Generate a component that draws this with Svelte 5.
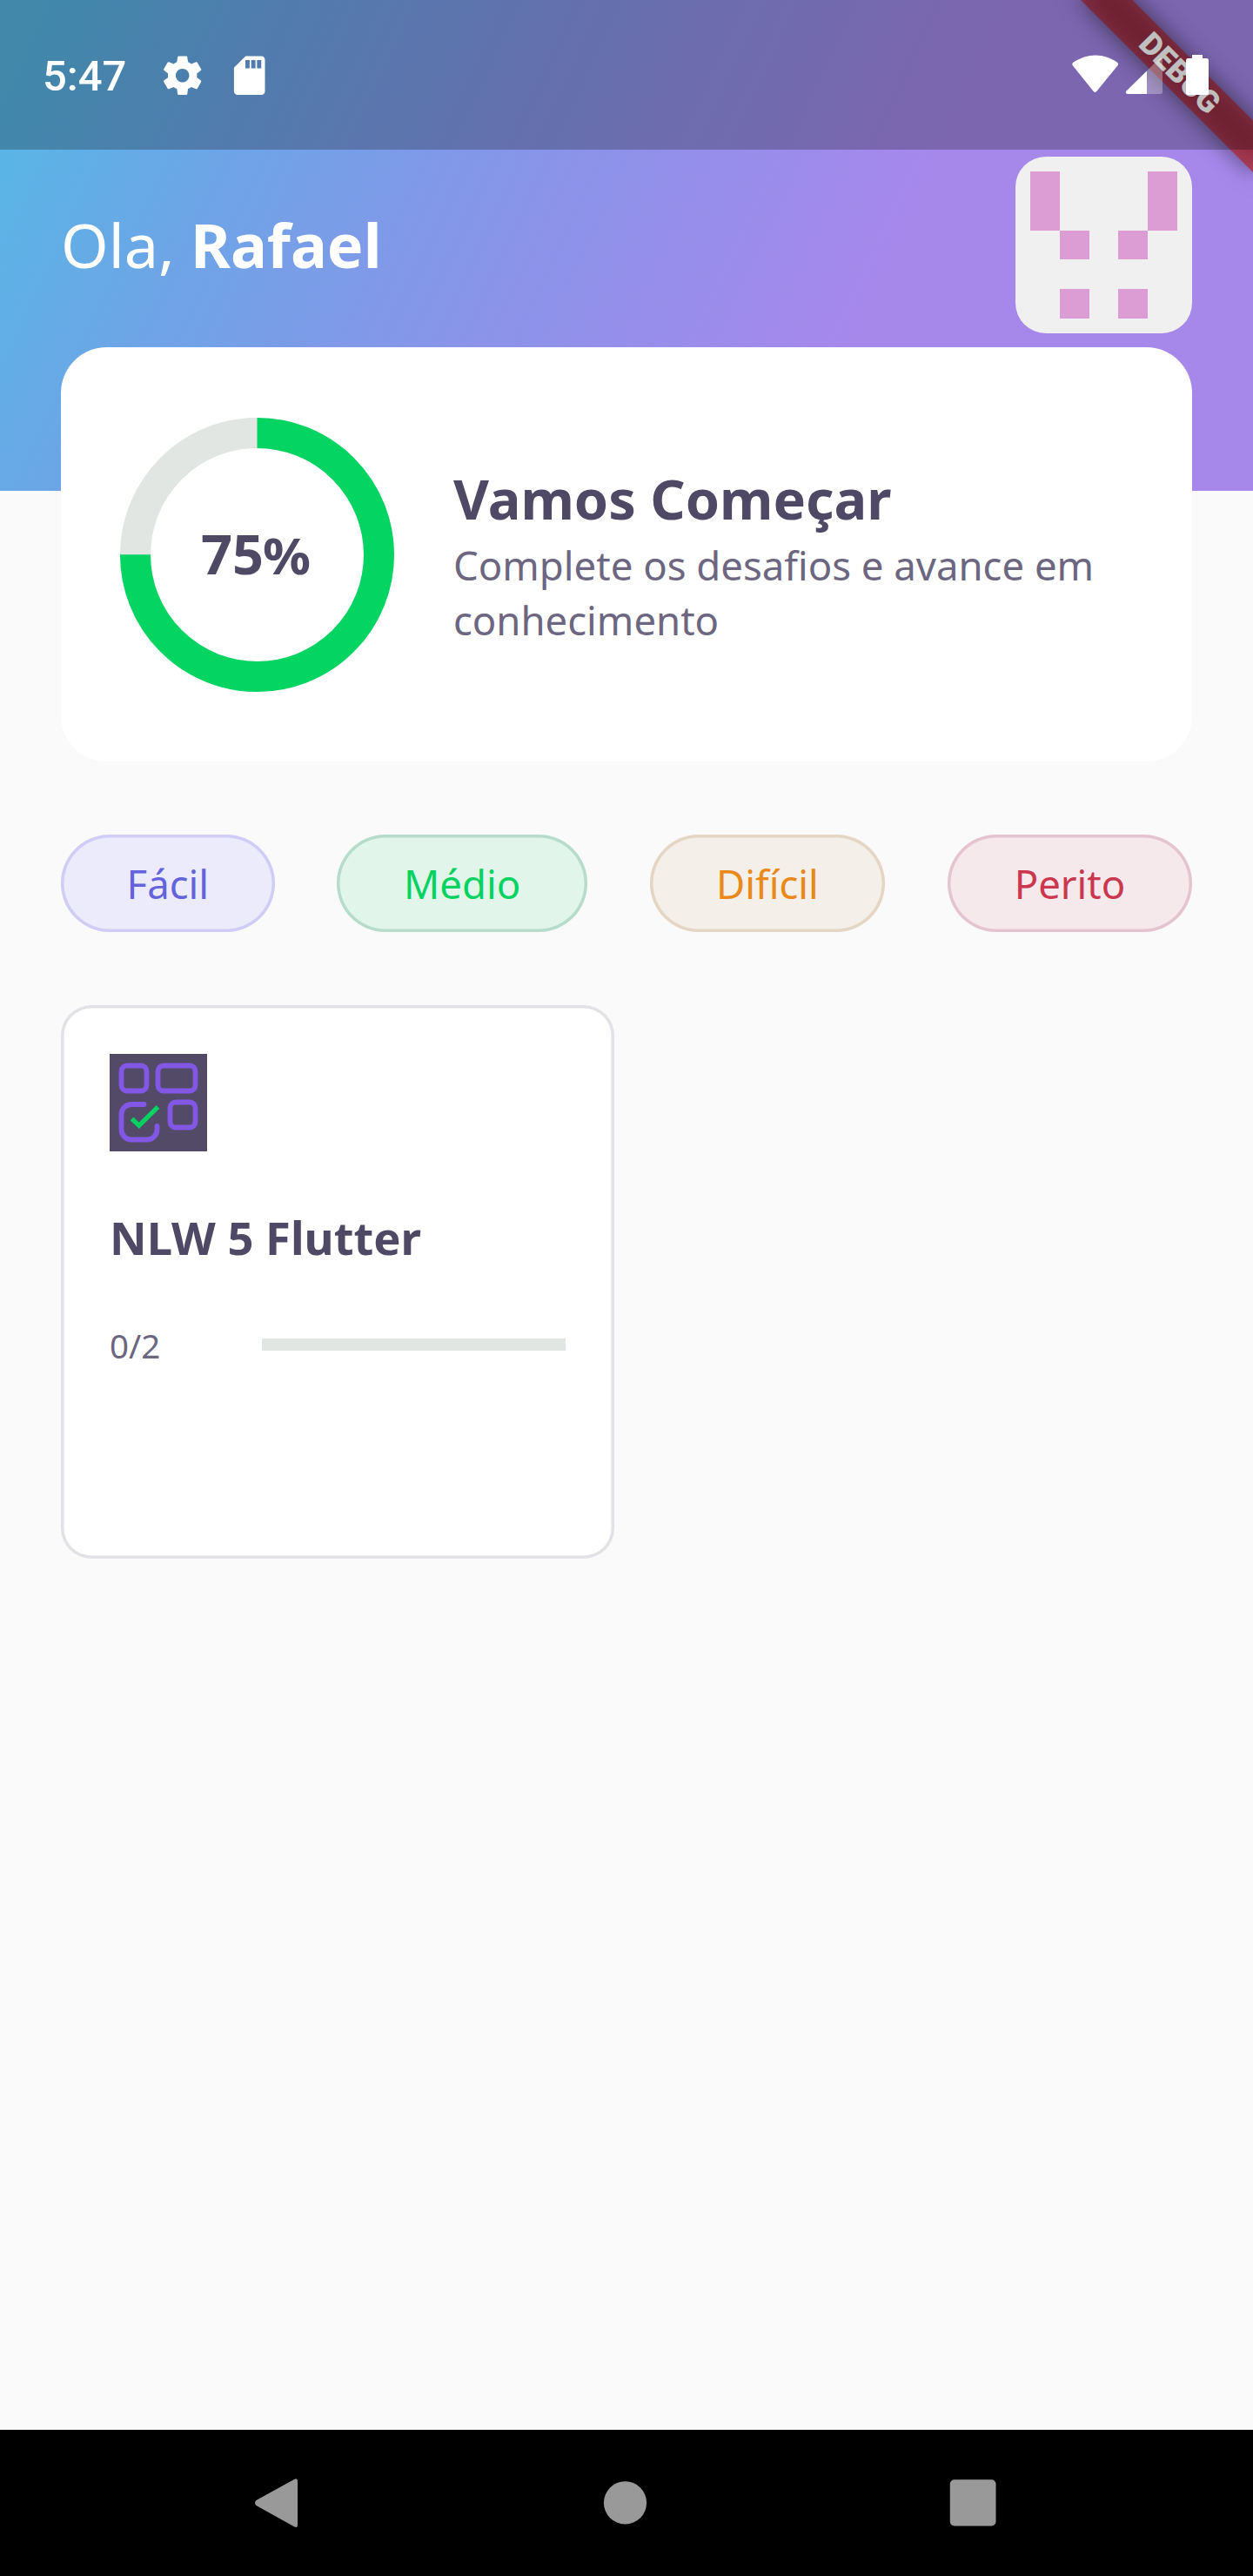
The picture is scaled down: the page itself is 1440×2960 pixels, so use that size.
<script>
  const user = 'Rafael';
  const score = 0.75;
  const radius = 140;
  const circumference = 2 * Math.PI * radius;

  const levels = [
    { label: 'Fácil', tone: 'easy' },
    { label: 'Médio', tone: 'medium' },
    { label: 'Difícil', tone: 'hard' },
    { label: 'Perito', tone: 'expert' }
  ];

  const quizzes = [{ title: 'NLW 5 Flutter', answered: 0, total: 2 }];

  // Filled cells of the identicon, on a 420-unit canvas
  const cells = [
    [35, 35, 70, 140],
    [315, 35, 70, 140],
    [105, 175, 70, 70],
    [245, 175, 70, 70],
    [105, 315, 70, 70],
    [245, 315, 70, 70]
  ];
</script>

<div class="screen">
  <header>
    <div class="ribbon"><span>DEBUG</span></div>
    <div class="status">
      <span class="clock">5:47</span>
      <svg class="gear" viewBox="0 0 24 24" width="53.4" height="53.4">
        <path
          fill="#fff"
          fill-rule="evenodd"
          d="M19.43 12.98c.04-.32.07-.64.07-.98s-.03-.66-.07-.98l2.11-1.65c.19-.15.24-.42.12-.64l-2-3.46c-.12-.22-.39-.3-.61-.22l-2.49 1c-.52-.4-1.08-.73-1.69-.98l-.38-2.65C14.46 2.18 14.25 2 14 2h-4c-.25 0-.46.18-.49.42l-.38 2.65c-.61.25-1.17.59-1.69.98l-2.49-1c-.23-.09-.49 0-.61.22l-2 3.46c-.13.22-.07.49.12.64l2.11 1.65c-.04.32-.07.65-.07.98s.03.66.07.98l-2.11 1.65c-.19.15-.24.42-.12.64l2 3.46c.12.22.39.3.61.22l2.49-1c.52.4 1.08.73 1.69.98l.38 2.65c.03.24.24.42.49.42h4c.25 0 .46-.18.49-.42l.38-2.65c.61-.25 1.17-.59 1.69-.98l2.49 1c.23.09.49 0 .61-.22l2-3.46c.12-.22.07-.49-.12-.64l-2.11-1.65zM12 15.5c-1.93 0-3.5-1.57-3.5-3.5s1.57-3.5 3.5-3.5 3.5 1.57 3.5 3.5-1.57 3.5-3.5 3.5z"
        />
      </svg>
      <svg class="sd" viewBox="0 0 24 24" width="53.4" height="53.4">
        <path
          fill="#fff"
          fill-rule="evenodd"
          d="M18.2 2H10L4 8v12.2c0 1 .8 1.8 1.8 1.8h12.4c1 0 1.8-.8 1.8-1.8V3.8c0-1-.8-1.8-1.8-1.8zM12.1 8.3H9.9V4.1h2.2zm3 0h-2.2V4.1h2.2zm3 0h-2.2V4.1h2.2z"
        />
      </svg>
      <svg class="signals" viewBox="0 0 158 46" width="158" height="46">
        <path fill="#fff" d="M.8 12.2Q-.7 10.2 1.4 8.7C18-2.3 36-2.3 52 8.7Q54 10.2 52.5 12.2L28.3 42Q26.5 44 24.7 42Z" />
        <path fill="#fff" fill-opacity=".3" d="M86 18.5 99 5.5Q104 1 104 6V42.5Q104 45 101.5 45H86Z" />
        <path fill="#fff" d="M86 18.5V45H64Q60.5 44.5 62.5 41.5Z" />
        <path fill="#fff" d="M138 0h12v4h4.5q2.5 0 2.5 2.5v37q0 2.5-2.5 2.5h-21q-2.5 0-2.5-2.5v-37q0-2.5 2.5-2.5h4.5z" />
      </svg>
    </div>
    <div class="greeting">
      <p>Ola, <b>{user}</b></p>
      <svg class="avatar" viewBox="0 0 420 420" width="203" height="203" shape-rendering="crispEdges">
        <rect width="420" height="420" fill="#f0f0f0" />
        {#each cells as [x, y, w, h]}
          <rect {x} {y} width={w} height={h} fill="#dc9dd5" />
        {/each}
      </svg>
    </div>
  </header>

  <section class="score">
    <div class="chart">
      <svg viewBox="0 0 315 315" width="315" height="315">
        <circle cx="157.5" cy="157.5" r={radius} fill="none" stroke="#e1e6e2" stroke-width="35" />
        <circle
          cx="157.5"
          cy="157.5"
          r={radius}
          fill="none"
          stroke="#04d461"
          stroke-width="35"
          stroke-dasharray="{circumference * score} {circumference}"
          transform="rotate(-90 157.5 157.5)"
        />
      </svg>
      <strong>{score * 100}<span class="unit">%</span></strong>
    </div>
    <div class="intro">
      <h1>Vamos Começar</h1>
      <p>Complete os desafios e avance em conhecimento</p>
    </div>
  </section>

  <div class="levels">
    {#each levels as level}
      <button class={level.tone}>{level.label}</button>
    {/each}
  </div>

  <main>
    {#each quizzes as quiz}
      <article>
        <svg class="badge" viewBox="0 0 112 112" width="112" height="112">
          <rect width="112" height="112" fill="#524a67" />
          <g class="glyph" fill="none" stroke="#8257e5" stroke-width="5.8" stroke-linecap="round">
            <rect x="13.5" y="13.5" width="29" height="29" rx="6.5" />
            <rect x="55.5" y="13.5" width="43" height="29" rx="6.5" />
            <rect x="69.5" y="55.5" width="29" height="29" rx="6.5" />
            <path d="M39.5 58H25A11.5 11.5 0 0 0 13.5 69.5V87A11.5 11.5 0 0 0 25 98.5H43A11.5 11.5 0 0 0 54.5 87V83" />
            <path stroke="#04d361" stroke-width="5.2" stroke-linecap="butt" d="M25.5 74.5 33.8 82.3 55.5 60.8" />
          </g>
        </svg>
        <h2>{quiz.title}</h2>
        <div class="progress">
          <span>{quiz.answered}/{quiz.total}</span>
          <div class="track"><i style:width="{(quiz.answered / quiz.total) * 100}%"></i></div>
        </div>
      </article>
    {/each}
  </main>

  <nav>
    <svg viewBox="0 0 60 60" width="60" height="60">
      <path fill="#999" d="M4.5 26 48.5 1.8Q52 .3 52 4V54Q52 58 48.5 56.5L4.5 32Q1.5 29 4.5 26Z" />
    </svg>
    <svg viewBox="0 0 60 60" width="60" height="60"><circle cx="29.5" cy="28.8" r="24.6" fill="#999" /></svg>
    <svg viewBox="0 0 60 60" width="60" height="60"><rect x="3.8" y="2.2" width="52.7" height="53.2" rx="5" fill="#999" /></svg>
  </nav>
</div>

<style>
  :global(body) {
    margin: 0;
    background: #fafafa;
  }

  .screen {
    display: flex;
    flex-direction: column;
    width: 1440px;
    height: 2960px;
    overflow: hidden;
    background: #fafafa;
    font-family: 'Noto Sans', sans-serif;
    color: #4f4966;
  }

  svg {
    display: block;
    flex: none;
  }

  h1,
  h2,
  p {
    margin: 0;
  }

  header {
    position: relative;
    flex: none;
    height: 563.5px;
    overflow: hidden;
    background: linear-gradient(
      115.13deg,
      #57b6e5 51.5px,
      #6da5e7 301.5px,
      #8298e8 551.5px,
      #958fea 801.5px,
      #a688eb 1052px
    );
  }

  .status {
    position: relative;
    display: flex;
    align-items: flex-start;
    height: 172px;
    box-sizing: border-box;
    padding: 0 50px 0 49px;
    background: rgba(0, 0, 0, 0.25);
    color: #fff;
  }

  .clock {
    width: 133.5px;
    margin-top: 59px;
    font: 500 49px/57px Roboto, sans-serif;
  }

  .gear,
  .sd {
    margin-top: 59.6px;
  }

  .sd {
    margin-left: 23.7px;
  }

  .signals {
    margin: 63px 0 0 auto;
  }

  .ribbon {
    position: absolute;
    top: 98px;
    right: -140px;
    width: 280px;
    height: 42px;
    transform: rotate(45deg);
    transform-origin: 140px -98px;
    text-align: center;
    color: #fff;
    font: 900 35.7px/42px Roboto, sans-serif;
  }

  /* Soft shadow that shows through the translucent band */
  .ribbon::before,
  .ribbon::after {
    content: '';
    position: absolute;
    inset: 0;
    z-index: -2;
    background: rgba(0, 0, 0, 0.5);
    filter: blur(14px);
  }

  .ribbon::after {
    z-index: -1;
    background: rgba(183, 28, 28, 0.627);
    filter: none;
  }

  .greeting {
    display: flex;
    align-items: center;
    justify-content: space-between;
    padding: 8px 70px 0;
    color: #fff;
    font-size: 70px;
    line-height: 95px;
  }

  .avatar {
    border-radius: 35px;
  }

  .score {
    position: relative;
    display: flex;
    align-items: center;
    gap: 68px;
    box-sizing: border-box;
    height: 476px;
    margin: -164.5px 70px 0;
    padding: 0 68px;
    border-radius: 52.5px;
    background: #fff;
    flex: none;
  }

  .chart {
    display: grid;
    place-items: center;
  }

  .chart > :global(*) {
    grid-area: 1 / 1;
  }

  .chart strong {
    padding-right: 5px;
    font-size: 63px;
    line-height: 86px;
    font-weight: 700;
  }

  .unit {
    display: inline-block;
    margin-left: 1px;
    font-size: 56.5px;
    transform: scaleX(1.08);
  }

  h1 {
    margin-bottom: 2px;
    font-size: 63px;
    line-height: 86px;
    font-weight: 700;
  }

  .intro p {
    color: #6c6680;
    font-size: 45.5px;
    line-height: 63px;
  }

  .levels {
    display: flex;
    justify-content: space-between;
    margin: 84px 70px 0;
  }

  button {
    height: 111.5px;
    padding: 0;
    border: 0;
    border-radius: 56px;
    font: 45.5px/62px 'Noto Sans', sans-serif;
  }

  .easy {
    width: 245.5px;
    color: #6363db;
    background: #ecebfb;
    box-shadow: inset 0 0 0 3.5px #cfcdf5;
  }

  .medium {
    width: 287.5px;
    color: #04d361;
    background: #e1f5eb;
    box-shadow: inset 0 0 0 3.5px #b7dccb;
  }

  .hard {
    width: 270.5px;
    color: #e9891a;
    background: #f4efe9;
    box-shadow: inset 0 0 0 3.5px #e5d5c4;
  }

  .expert {
    width: 281px;
    color: #cc3750;
    background: #f5e9ec;
    box-shadow: inset 0 0 0 3.5px #e5c4d1;
  }

  main {
    display: grid;
    grid-template-columns: 636px 636px;
    gap: 28px;
    margin: 84.5px 70px auto;
  }

  article {
    box-sizing: border-box;
    height: 636px;
    padding: 56px;
    border-radius: 35px;
    background: #fff;
    box-shadow: inset 0 0 0 3.5px #e1e1e6;
  }

  .glyph {
    filter: blur(0.6px);
  }

  h2 {
    margin-top: 62.5px;
    font-size: 52.5px;
    line-height: 72px;
    font-weight: 700;
  }

  .progress {
    display: grid;
    grid-template-columns: 1fr 2fr;
    align-items: center;
    margin-top: 62.5px;
    color: #6c6680;
    font-size: 38.5px;
    line-height: 52px;
  }

  .track {
    height: 14px;
    margin-top: -2px;
    background: #e1e6e2;
  }

  .track i {
    display: block;
    height: 100%;
    background: #04d361;
  }

  nav {
    display: flex;
    justify-content: space-between;
    box-sizing: border-box;
    height: 168px;
    padding: 55px 292px 0 290px;
    background: #000;
    flex: none;
  }
</style>
